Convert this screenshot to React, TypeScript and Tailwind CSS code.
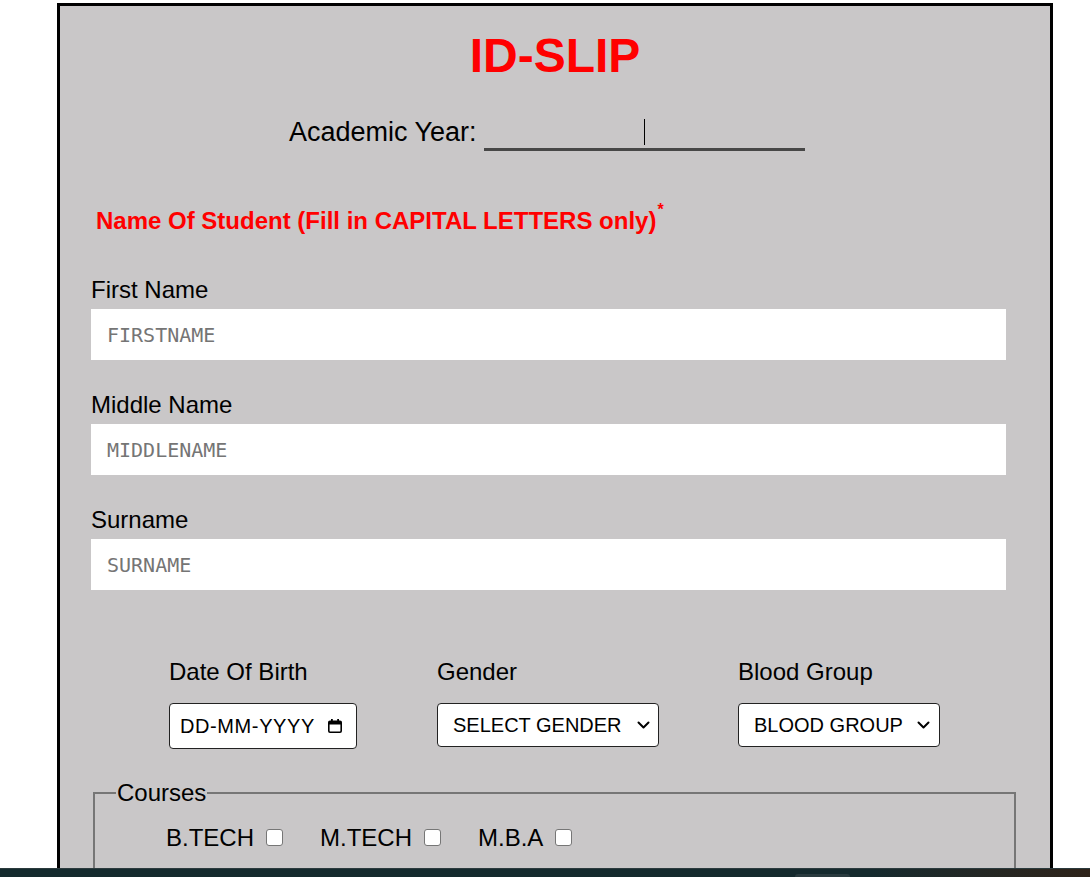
import React from 'react';

const Chevron = () => (
  <svg width="13" height="8" viewBox="0 0 13 8" fill="none">
    <path d="M1.5 1.5l5 5 5-5" stroke="#000" strokeWidth="2" strokeLinecap="round" strokeLinejoin="round" />
  </svg>
);

const CalendarIcon = () => (
  <svg width="16" height="16" viewBox="0 0 16 16" fill="none">
    <rect x="1.8" y="3.3" width="12.4" height="11" rx="1.2" stroke="#000" strokeWidth="1.6" />
    <rect x="1.8" y="3.3" width="12.4" height="3.2" fill="#000" />
    <rect x="4" y="1" width="1.8" height="3" fill="#000" />
    <rect x="10.2" y="1" width="1.8" height="3" fill="#000" />
  </svg>
);

const nameFields = [
  { label: 'First Name', placeholder: 'FIRSTNAME' },
  { label: 'Middle Name', placeholder: 'MIDDLENAME' },
  { label: 'Surname', placeholder: 'SURNAME' },
];

const courses = ['B.TECH', 'M.TECH', 'M.B.A'];

const App = () => {
  return (
    <div className="min-h-screen bg-white font-['Liberation_Sans',Arial,sans-serif] text-black">
      <div className="ml-[57px] mt-[3px] w-[996px] border-[3px] border-black bg-[#c9c7c8] pb-[120px]">
        <h1 className="pt-[22px] text-center text-[48px] leading-[56px] font-bold text-[#ff0000]">ID-SLIP</h1>

        {/* Academic year */}
        <div className="mt-[32px] flex items-start pl-[229px]">
          <span className="text-[27px] leading-[32px]">Academic Year:</span>
          <div className="relative ml-[7px] h-[35px] w-[321px] border-b-[3px] border-[#474747]">
            <input className="h-full w-full bg-transparent text-center outline-none" />
            <span className="absolute left-[160px] top-[3px] h-[26px] w-px bg-black" />
          </div>
        </div>

        <div className="mt-[56px] pl-[36px] text-[24px] leading-[28px] font-bold text-[#ff0000]">
          Name Of Student (Fill in CAPITAL LETTERS only)
          <span className="relative -top-[5px] ml-[1px] inline-block align-top text-[16px] leading-none">*</span>
        </div>

        <div className="mt-[41px] flex flex-col gap-[31px] pl-[31px]">
          {nameFields.map((f) => (
            <div key={f.label}>
              <label className="block text-[24px] leading-[28px]">{f.label}</label>
              <input
                placeholder={f.placeholder}
                className="mt-[5px] block h-[51px] w-[915px] bg-white pl-[16px] font-['DejaVu_Sans_Mono',monospace] text-[20px] outline-none placeholder:text-[#757575]"
              />
            </div>
          ))}
        </div>

        {/* DOB / gender / blood group */}
        <div className="mt-[68px] flex pl-[109px]">
          <div className="w-[188px]">
            <div className="text-[24px] leading-[28px]">Date Of Birth</div>
            <div className="mt-[17px] flex h-[46px] items-center justify-between rounded-[4px] border border-[#222] bg-white pl-[10px] pr-[13px] text-[20px] tracking-[0.6px]">
              <span>DD-MM-YYYY</span>
              <CalendarIcon />
            </div>
          </div>
          <div className="ml-[80px] w-[222px]">
            <div className="text-[24px] leading-[28px]">Gender</div>
            <div className="mt-[17px] flex h-[44px] items-center justify-between rounded-[4px] border border-[#222] bg-white pl-[15px] pr-[8px] text-[20px]">
              <span>SELECT GENDER</span>
              <Chevron />
            </div>
          </div>
          <div className="ml-[79px] w-[202px]">
            <div className="text-[24px] leading-[28px]">Blood Group</div>
            <div className="mt-[17px] flex h-[44px] items-center justify-between rounded-[4px] border border-[#222] bg-white pl-[15px] pr-[9px] text-[20px]">
              <span>BLOOD GROUP</span>
              <Chevron />
            </div>
          </div>
        </div>

        {/* Courses */}
        <fieldset className="ml-[33px] mt-[30px] h-[220px] w-[923px] border-2 border-[#767676] px-[21px]">
          <legend className="px-[1px] text-[24px] leading-[28px]">Courses</legend>
          <div className="mt-[17px] ml-[50px] flex items-start gap-[37px]">
            {courses.map((c) => (
              <label key={c} className="flex items-start text-[24px] leading-[28px]">
                <span>{c}</span>
                <input
                  type="checkbox"
                  className="ml-[12px] mt-[5px] h-[17px] w-[17px] appearance-none rounded-[3px] border border-[#767676] bg-white"
                />
              </label>
            ))}
          </div>
        </fieldset>
      </div>

      {/* taskbar strip */}
      <div className="fixed bottom-0 left-0 right-0 h-[9px] border-t border-[#2b3a3d] bg-linear-to-r from-[#142a2e] via-[#152a2e] via-80% to-[#2e2319]">
        <div className="absolute left-[795px] top-[5px] h-[4px] w-[55px] rounded-t-[3px] bg-[#2a3b3f]" />
      </div>
    </div>
  );
};

export default App;
